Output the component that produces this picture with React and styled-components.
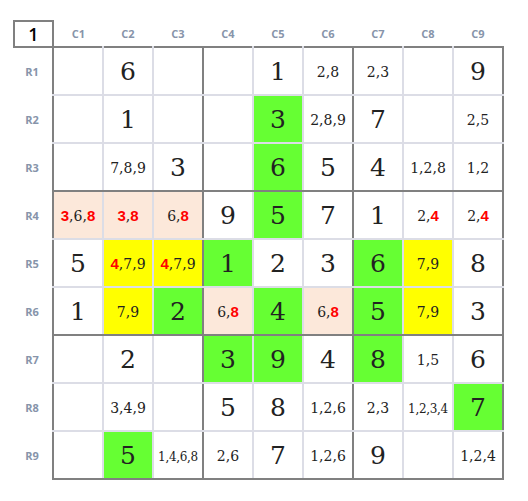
import React from 'react';
import styled, { createGlobalStyle } from 'styled-components';

const GlobalStyle = createGlobalStyle`
  body {
    margin: 0;
    background: #fff;
  }
`

const Page = styled.div`
  padding: 20px 0 0 13px;
`
const Board = styled.table`
  border-collapse: collapse;
  table-layout: fixed;
`
const Corner = styled.th`
  width: 37px;
  height: 24px;
  padding: 0;
  border: 2px solid #808080;
  font-family: "Open Sans", "Liberation Sans", sans-serif;
  font-weight: 600;
  font-size: 18px;
  color: #000;
  text-align: center;
`
const ColHead = styled.th`
  width: 48px;
  padding: 0;
  font-family: "Open Sans", "Liberation Sans", sans-serif;
  font-weight: 700;
  font-size: 11px;
  color: #8794aa;
  text-align: center;
  vertical-align: middle;
`
const RowHead = styled.th`
  padding: 0 2px 0 0;
  font-family: "Open Sans", "Liberation Sans", sans-serif;
  font-weight: 700;
  font-size: 11px;
  color: #8794aa;
  text-align: center;
`
const fills = {
  green: '#66ff33',
  yellow: '#ffff00',
  peach: '#fce8da',
}
const Cell = styled.td`
  width: 48px;
  height: 46px;
  padding: 0;
  text-align: center;
  vertical-align: middle;
  background: ${p => fills[p.$fill] || '#fff'};
  border: 2px solid #dcdde6;
  border-left-color: ${p => (p.$c % 3 === 0 ? '#808080' : '#dcdde6')};
  border-right-color: ${p => (p.$c % 3 === 2 ? '#808080' : '#dcdde6')};
  border-top-color: ${p => (p.$r % 3 === 0 ? '#808080' : '#dcdde6')};
  border-bottom-color: ${p => (p.$r % 3 === 2 ? '#808080' : '#dcdde6')};
  font-family: "DejaVu Serif", "Liberation Serif", serif;
  color: #222;
`
const Value = styled.span`
  font-size: 25px;
  line-height: 1;
`
const Notes = styled.span`
  font-size: ${p => (p.$many ? '12px' : '14px')};
  letter-spacing: ${p => (p.$many ? '-0.3px' : '0')};
  line-height: 1;
`
const Hot = styled.span`
  font-family: "Liberation Sans", Arial, sans-serif;
  font-weight: 700;
  font-size: 15px;
  color: #ff0000;
`

// value as number, notes as string ("*" marks a red digit)
const rows = [
  [null, 6, null, null, 1, '2,8', '2,3', null, 9],
  [null, 1, null, null, [3, 'green'], '2,8,9', 7, null, '2,5'],
  [null, '7,8,9', 3, null, [6, 'green'], 5, 4, '1,2,8', '1,2'],
  [['*3,6,*8', 'peach'], ['*3,*8', 'peach'], ['6,*8', 'peach'], 9, [5, 'green'], 7, 1, '2,*4', '2,*4'],
  [5, ['*4,7,9', 'yellow'], ['*4,7,9', 'yellow'], [1, 'green'], 2, 3, [6, 'green'], ['7,9', 'yellow'], 8],
  [1, ['7,9', 'yellow'], [2, 'green'], ['6,*8', 'peach'], [4, 'green'], ['6,*8', 'peach'], [5, 'green'], ['7,9', 'yellow'], 3],
  [null, 2, null, [3, 'green'], [9, 'green'], 4, [8, 'green'], '1,5', 6],
  [null, '3,4,9', null, 5, 8, '1,2,6', '2,3', '1,2,3,4', [7, 'green']],
  [null, [5, 'green'], '1,4,6,8', '2,6', 7, '1,2,6', 9, null, '1,2,4'],
]

function Content({ v }) {
  if (v === null) return null;
  if (typeof v === 'number') return <Value>{v}</Value>;
  const parts = v.split(',');
  return (
    <Notes $many={parts.length > 3}>
      {parts.map((d, i) => (
        <React.Fragment key={i}>
          {i > 0 && ','}
          {d[0] === '*' ? <Hot>{d.slice(1)}</Hot> : d}
        </React.Fragment>
      ))}
    </Notes>
  );
}

export default function App() {
  return (
    <Page>
      <GlobalStyle />
      <Board>
        <thead>
          <tr>
            <Corner>1</Corner>
            {[1, 2, 3, 4, 5, 6, 7, 8, 9].map(c => <ColHead key={c}>C{c}</ColHead>)}
          </tr>
        </thead>
        <tbody>
          {rows.map((row, r) => (
            <tr key={r}>
              <RowHead>R{r + 1}</RowHead>
              {row.map((item, c) => {
                const [v, fill] = Array.isArray(item) ? item : [item, null];
                return (
                  <Cell key={c} $r={r} $c={c} $fill={fill}>
                    <Content v={v} />
                  </Cell>
                );
              })}
            </tr>
          ))}
        </tbody>
      </Board>
    </Page>
  );
}
